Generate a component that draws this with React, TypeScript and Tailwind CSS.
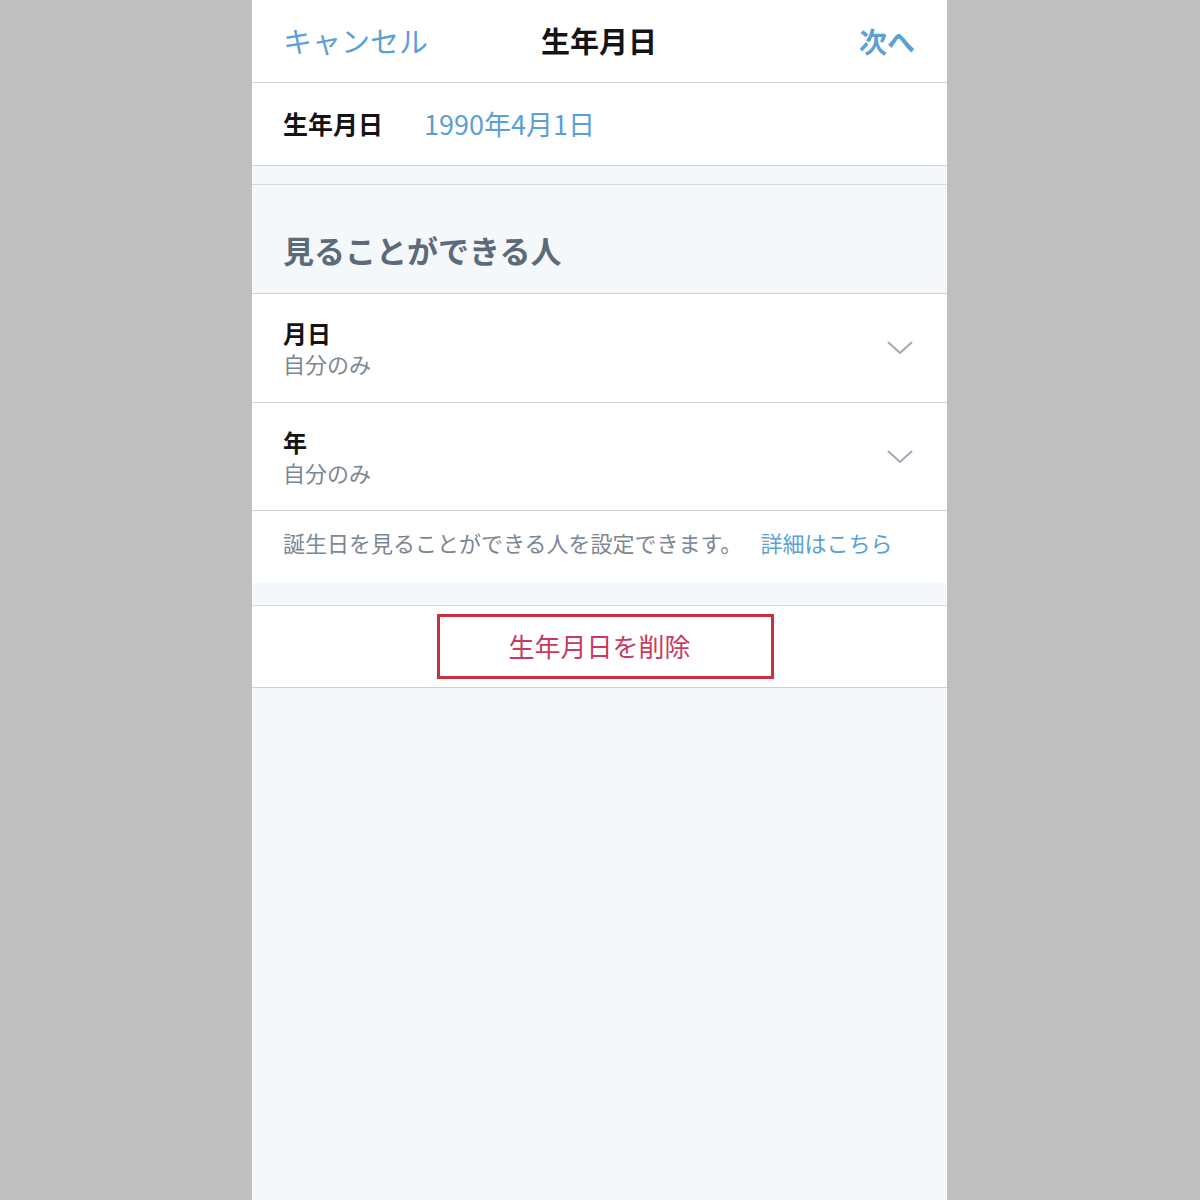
import React from "react";

const Chevron = () => (
  <svg width="26" height="14" viewBox="0 0 26 14" fill="none">
    <path d="M1.5 1.5 L13 12 L24.5 1.5" stroke="#a0a9b2" strokeWidth="2" strokeLinecap="round" strokeLinejoin="round" />
  </svg>
);

export default function App() {
  return (
    <div
      className="w-[1200px] h-[1200px] bg-[#bfbfbf] flex pl-[252px] overflow-hidden"
      style={{ fontFamily: '"Noto Sans CJK JP", "Noto Sans", sans-serif' }}
    >
      <div className="w-[695px] h-full bg-[#f5f8fa] flex flex-col">
        {/* header */}
        <div className="h-[83px] bg-white border-b border-[#cdd3d8] flex items-center justify-between pl-[31px] pr-[32px]">
          <span className="text-[29px] text-[#5c9fd6] w-[150px]">キャンセル</span>
          <span className="text-[29px] font-bold text-[#141414]">生年月日</span>
          <span className="text-[28px] font-bold text-[#5c9fd6] w-[150px] text-right">次へ</span>
        </div>
        {/* birthdate row */}
        <div className="h-[83px] bg-white border-b border-[#cdd3d8] flex items-center px-[31px]">
          <span className="text-[25px] font-bold text-[#141414] w-[141px]">生年月日</span>
          <span className="text-[27px] text-[#5c9fd6]">1990年4月1日</span>
        </div>
        <div className="h-[19px] border-b border-[#d5dadf]" />
        {/* section header */}
        <div className="h-[109px] border-b border-[#cdd3d8] flex items-center px-[31px] pt-[22px]">
          <span className="text-[31px] font-bold text-[#5b6b7a]">見ることができる人</span>
        </div>
        {/* rows */}
        <div className="h-[109px] bg-white border-b border-[#cdd3d8] flex items-center justify-between pl-[31px] pr-[34px]">
          <div className="flex flex-col leading-[31px]">
            <span className="text-[24px] font-bold text-[#141414]">月日</span>
            <span className="text-[22px] text-[#7b8792]">自分のみ</span>
          </div>
          <Chevron />
        </div>
        <div className="h-[108px] bg-white border-b border-[#cdd3d8] flex items-center justify-between pl-[31px] pr-[34px]">
          <div className="flex flex-col leading-[31px]">
            <span className="text-[24px] font-bold text-[#141414]">年</span>
            <span className="text-[22px] text-[#7b8792]">自分のみ</span>
          </div>
          <Chevron />
        </div>
        <div className="h-[72px] bg-white flex items-center px-[31px] pb-[10px]">
          <span className="text-[22px] text-[#7b8792] whitespace-nowrap">
            誕生日を見ることができる人を設定できます。
            <span className="text-[#5c9fd6] ml-[18px]">詳細はこちら</span>
          </span>
        </div>
        <div className="h-[23px] border-b border-[#d5dadf]" />
        {/* delete */}
        <div className="h-[82px] bg-white border-b border-[#cdd3d8] flex items-center justify-center">
          <div className="w-[337px] h-[65px] border-[3px] border-[#c9303f] flex items-center justify-center ml-[11px] pr-[11px] pb-[2px]">
            <span className="text-[26px] text-[#c83a5e]">生年月日を削除</span>
          </div>
        </div>
        <div className="flex-1" />
      </div>
    </div>
  );
}
